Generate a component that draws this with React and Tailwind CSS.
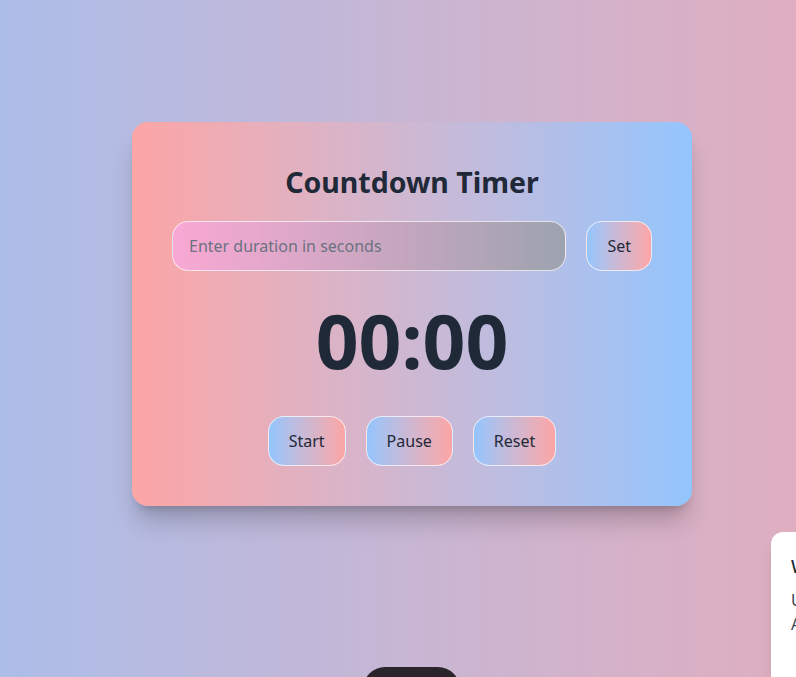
import React, { useState } from "react";

export default function App() {
  const [value, setValue] = useState("");
  const font = { fontFamily: '"Noto Sans", "Open Sans", sans-serif' };
  const btn =
    "rounded-2xl border border-white/70 bg-gradient-to-r from-[#93c5fd] to-[#fca5a5] px-5 py-3 text-base leading-6 text-[#1f2937]";
  return (
    <div
      className="relative h-[677px] w-full overflow-hidden bg-gradient-to-r from-[#acbde8] to-[#dfaec0]"
      style={font}
    >
      <div className="pl-[132px] pt-[122px]">
        <div className="w-[560px] rounded-2xl bg-gradient-to-r from-[#fca5a5] to-[#93c5fd] p-10 shadow-xl shadow-black/20">
          <h1 className="mb-[21px] pt-[2px] text-center text-[28.5px] font-bold leading-9 text-[#1f2937]">
            Countdown Timer
          </h1>
          <div className="flex gap-5">
            <input
              value={value}
              onChange={(e) => setValue(e.target.value)}
              placeholder="Enter duration in seconds"
              className="min-w-0 flex-1 rounded-2xl border border-white/70 bg-gradient-to-r from-[#f9a8d4] to-[#9ca3af] px-4 py-3 text-base leading-6 text-[#1f2937] outline-none placeholder:text-[#6b7280]"
            />
            <button className={btn}>Set</button>
          </div>
          <div className="mb-[38px] mt-[32px] text-center text-[75px] font-bold leading-none text-[#1f2937]">
            00:00
          </div>
          <div className="flex justify-center gap-5">
            <button className={btn}>Start</button>
            <button className={btn}>Pause</button>
            <button className={btn}>Reset</button>
          </div>
        </div>
      </div>

      <div className="absolute left-[771px] top-[532px] h-[200px] w-[320px] rounded-tl-xl bg-white px-5 pt-5 shadow-lg">
        <div className="text-lg font-medium leading-7 text-[#1f2937]">Welcome</div>
        <div className="mt-2 text-base leading-6 text-[#374151]">
          Use the timer to count down.
          <br />
          Adjust the duration anytime.
        </div>
      </div>

      <div className="absolute left-[363px] top-[667px] h-[44px] w-[97px] rounded-full bg-[#29252a]" />
    </div>
  );
}
